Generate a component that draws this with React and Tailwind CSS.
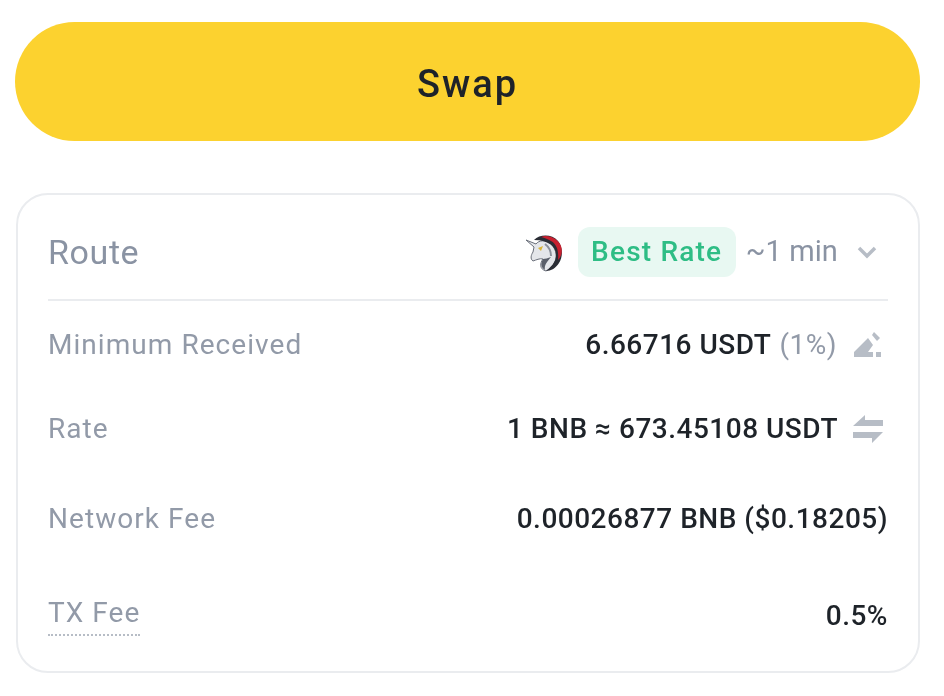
const font = { fontFamily: '"Roboto", "Liberation Sans", sans-serif' };

function Unicorn() {
  return (
    <svg width="40" height="40" viewBox="0 0 40 40">
      <path d="M1 8 L11 12 C14 8 20 8 25 11 C30 15 33 23 30 30 C28 34 25 37 21 39 C14 37 15 31 18 27 C15 26 11 28 8 29 C5 27 6 23 8 20 L9 15 Z" fill="#e4e6ea" stroke="#6a6f7a" strokeWidth="1" />
      <path d="M9 8 C15 2 27 2 33 9 C38 15 38 25 34 31 C31 36 26 39 21 39 C26 35 31 30 31 23 C31 15 24 8 9 8 Z" fill="#2a2d35" />
      <path d="M16 5 C24 2 33 7 36 14 C38 20 36 25 33 28 C34 20 32 12 26 9 C23 7 20 6 16 5 Z" fill="#c8202f" />
      <path d="M13 16 L18 14 L16 19 Z" fill="#d8b43a" />
      <path d="M18 27 C16 31 15 35 20 38 C19 33 22 30 26 25 C23 26 20 27 18 27 Z" fill="#5a5f6a" />
      <path d="M20 12 C24 15 26 19 26 24" fill="none" stroke="#8b909a" strokeWidth="2" />
    </svg>
  );
}

function Row({ label, labelClass = "", children, className = "" }) {
  return (
    <div className={`flex items-center justify-between ${className}`}>
      <span className={`text-[28px] leading-[36px] tracking-[1.05px] text-[#929aa8] ${labelClass}`}>{label}</span>
      <div className="flex items-center text-[28px] font-medium leading-[36px] tracking-[0.5px] text-[#1e2329]">{children}</div>
    </div>
  );
}

export default function App() {
  return (
    <div style={font} className="h-[696px] w-[944px] overflow-hidden bg-white px-[15px] pt-[22px] blur-[0.5px]">
      <button className="flex h-[119px] w-[905px] items-center justify-center rounded-[60px] bg-[#fcd22f] pt-[5px] text-[38px] font-medium tracking-[2px] text-[#1e2329]">
        Swap
      </button>

      <div className="ml-px mt-[52px] h-[480px] w-[904px] rounded-[32px] border-2 border-[#eaecef] px-[30px]">
        <div className="flex h-[106px] items-center justify-between border-b-2 border-[#eaecef] pt-[10px]">
          <span className="text-[34px] tracking-[0.6px] text-[#8a93a3]">Route</span>
          <div className="flex items-center">
            <Unicorn />
            <span className="ml-[13px] flex h-[50px] w-[158px] items-center justify-center rounded-[12px] bg-[#e8f8f2] text-[28px] font-medium tracking-[1.2px] text-[#2ebd85]">
              Best Rate
            </span>
            <span className="ml-[10px] text-[29px] tracking-[0.1px] text-[#8a93a3]">~1 min</span>
            <svg className="ml-[19px] mr-[11px]" width="20" height="14" viewBox="0 0 20 14">
              <path d="M2 3 L10 11 L18 3" fill="none" stroke="#b7bdc6" strokeWidth="3.5" />
            </svg>
          </div>
        </div>

        <Row label="Minimum Received" className="mt-[26px]">
          6.66716 USDT <span className="ml-[8px] font-normal text-[#929aa8]">(1%)</span>
          <svg className="ml-[16px] mr-[5px]" width="30" height="28" viewBox="0 0 30 28">
            <path d="M1 26 V21 L15 7 L20 14 L15 21 H20 V26 Z" fill="#b7bdc6" />
            <path d="M19 4 L21 1 L27 7 L24 10 Z" fill="#b7bdc6" />
            <rect x="23" y="21" width="5" height="5" fill="#b7bdc6" />
          </svg>
        </Row>

        <Row label="Rate" className="mt-[48px]">
          1 BNB ≈ 673.45108 USDT
          <svg className="ml-[14px] mr-[4px]" width="32" height="28" viewBox="0 0 32 28">
            <path d="M1 11 L13 0 V5 H31 V11 Z" fill="#b7bdc6" />
            <path d="M1 17 H31 L20 28 V23 H1 Z" fill="#b7bdc6" />
          </svg>
        </Row>

        <Row label="Network Fee" className="mt-[54px]">
          0.00026877 BNB ($0.18205)
        </Row>

        <Row
          label="TX Fee"
          labelClass="pb-[3px] border-b-2 border-dotted border-[#b7bdc6]"
          className="mt-[58px]"
        >
          0.5%
        </Row>
      </div>
    </div>
  );
}
